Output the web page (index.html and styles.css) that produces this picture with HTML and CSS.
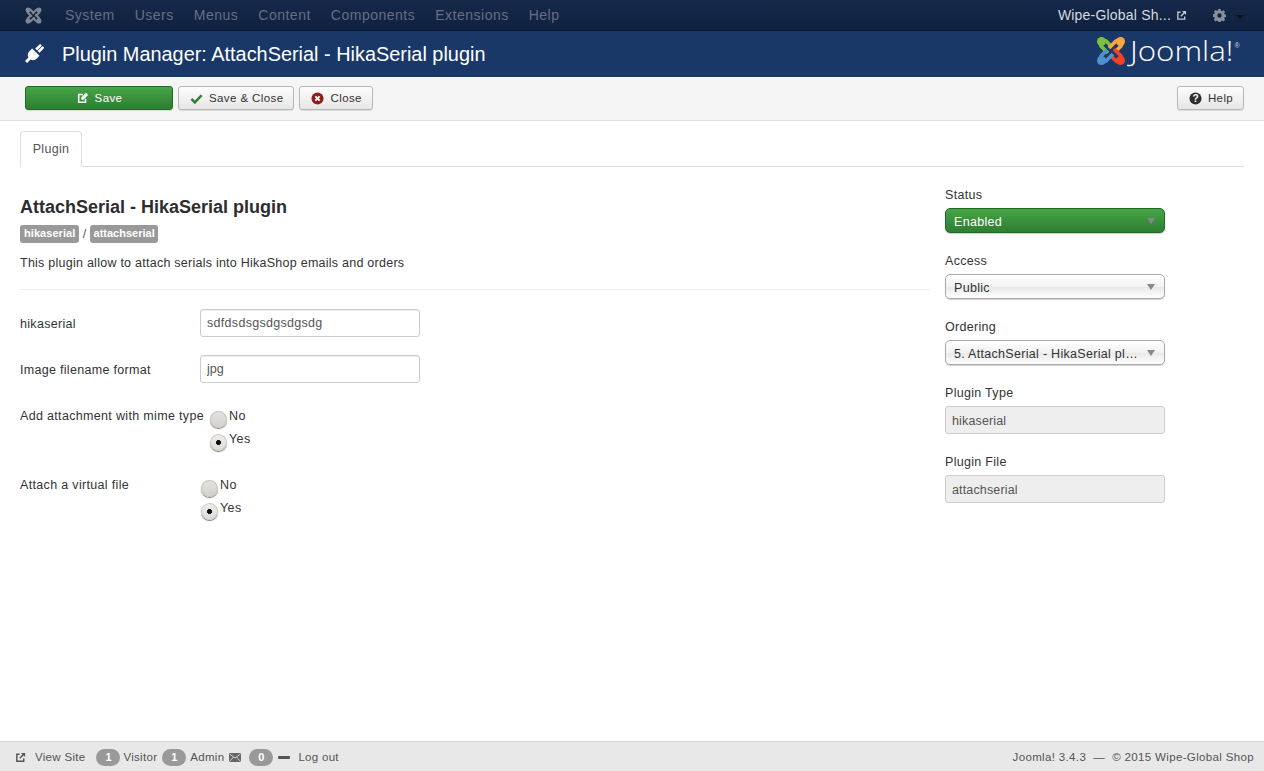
FILE: index.html
```html
<!DOCTYPE html>
<html lang="en">
<head>
<meta charset="utf-8">
<title>Plugin Manager</title>
<link rel="stylesheet" href="styles.css">
</head>
<body>
<nav class="topnav">
  <svg class="brand" viewBox="0 0 30 30" width="17" height="17"><defs><g id="arm"><path d="M16 11 L10 5 A3.800 3.800 0 0 0 5 10 L12 17" fill="none" stroke-width="3.800"/><circle cx="5.500" cy="5.500" r="4.500" stroke="none"/></g></defs><g fill="#7f8794" stroke="#7f8794"><use href="#arm"/><use href="#arm" transform="rotate(90 15 15)"/><use href="#arm" transform="rotate(180 15 15)"/><use href="#arm" transform="rotate(270 15 15)"/></g></svg>
  <ul class="menu">
    <li>System</li><li>Users</li><li>Menus</li><li>Content</li><li>Components</li><li>Extensions</li><li>Help</li>
  </ul>
  <div class="nav-right">
    <span class="site">Wipe-Global Sh...</span>
    <svg class="ext" viewBox="0 0 12 12" width="11" height="11"><path d="M9.500 7v3H2V2.500h3" fill="none" stroke="#c4c8cf" stroke-width="1.500"/><path d="M6.500 1h4.500v4.500L9.300 3.800 5.800 7.300 4.700 6.200 8.200 2.700z" fill="#c4c8cf"/></svg>
    <svg class="gear" viewBox="0 0 16 16" width="13" height="13"><path fill="#8a909b" fill-rule="evenodd" d="M6.600 0h2.800l.4 2.100 1.300.6 1.800-1.200 2 2-1.200 1.800.6 1.300 2.100.4v2.800l-2.100.4-.6 1.300 1.200 1.800-2 2-1.800-1.200-1.300.6-.4 2.100H6.600l-.4-2.100-1.300-.6-1.800 1.200-2-2 1.200-1.800-.6-1.300L-.4 9.400V6.600l2.100-.4.6-1.300L1.100 3.100l2-2 1.800 1.200 1.300-.6zM8 5.300a2.700 2.700 0 1 0 0 5.400 2.700 2.700 0 0 0 0-5.400z"/></svg>
    <span class="caret"></span>
  </div>
</nav>
<header class="titlebar">
  <svg class="plug" viewBox="0 0 20 20" width="21" height="21"><path fill="#fff" d="M0 18l3.300-3.300C2.200 12.500 2.700 10.300 4 9L6.800 6.200 13.800 13.200 11 16c-1.400 1.400-3.500 1.800-5.700.7L2 20z"/><path fill="#fff" d="M9.700 6.300l3.800-3.800c.6-.6 1.400-.6 1.900-.1s.5 1.300-.1 1.900L11.500 8.100zM12 8.500l3.800-3.800c.6-.6 1.400-.6 1.900-.1s.5 1.300-.1 1.900l-3.800 3.800z"/></svg>
  <h1>Plugin Manager: AttachSerial - HikaSerial plugin</h1>
  <div class="logo">
    <svg viewBox="0 0 30 30" width="30" height="30"><g fill="#7ac143" stroke="#7ac143"><use href="#arm"/></g><g fill="#f9a541" stroke="#f9a541"><use href="#arm" transform="rotate(90 15 15)"/></g><g fill="#f44321" stroke="#f44321"><use href="#arm" transform="rotate(180 15 15)"/></g><g fill="#5091cd" stroke="#5091cd"><use href="#arm" transform="rotate(270 15 15)"/></g></svg>
    <span class="logotext">Joomla!</span><sup class="reg">®</sup>
  </div>
</header>
<div class="toolbar">
  <button class="btn btn-success btn-save"><svg class="ic" viewBox="0 0 14 14" width="12" height="12"><path d="M10 8v4H2V3h5" fill="none" stroke="#fff" stroke-width="1.800"/><path d="M5 6.500L10.500 1 13 3.500 7.500 9H5z" fill="#fff"/></svg>Save</button>
  <button class="btn"><svg class="ic" viewBox="0 0 14 14" width="13" height="13"><path d="M1.500 7.500l3.700 3.700 7.300-7.700" fill="none" stroke="#2f7d32" stroke-width="2.600"/></svg>Save &amp; Close</button>
  <button class="btn"><svg class="ic" viewBox="0 0 14 14" width="13" height="13"><circle cx="7" cy="7" r="6.500" fill="#8f1f1b"/><path d="M4.700 4.700l4.600 4.600M9.300 4.700L4.700 9.300" stroke="#fff" stroke-width="2"/></svg>Close</button>
  <button class="btn btn-help"><svg class="ic" viewBox="0 0 14 14" width="13" height="13"><circle cx="7" cy="7" r="6.500" fill="#2d2d2d"/><text x="7" y="10.500" text-anchor="middle" class="qm">?</text></svg>Help</button>
</div>
<main class="content">
  <div class="tabs"><div class="tab">Plugin</div></div>
  <div class="columns">
    <section class="form">
      <h2>AttachSerial - HikaSerial plugin</h2>
      <div class="tags"><span class="tag">hikaserial</span><span class="slash">/</span><span class="tag tag-end">attachserial</span></div>
      <p class="desc">This plugin allow to attach serials into HikaShop emails and orders</p>
      <hr>
      <div class="row"><label>hikaserial</label><input class="text text-long" type="text" value="sdfdsdsgsdgsdgsdg"></div>
      <div class="row"><label>Image filename format</label><input class="text" type="text" value="jpg"></div>
      <div class="row radios">
        <label>Add attachment with mime type</label>
        <div class="options">
          <div class="opt"><input class="radio" type="radio" name="a"><span>No</span></div>
          <div class="opt"><input class="radio" type="radio" name="a" checked><span>Yes</span></div>
        </div>
      </div>
      <div class="row radios">
        <label>Attach a virtual file</label>
        <div class="options">
          <div class="opt"><input class="radio" type="radio" name="b"><span>No</span></div>
          <div class="opt"><input class="radio" type="radio" name="b" checked><span>Yes</span></div>
        </div>
      </div>
    </section>
    <aside class="side">
      <div class="field"><div class="flabel">Status</div><div class="select select-green"><span>Enabled</span><i></i></div></div>
      <div class="field"><div class="flabel">Access</div><div class="select"><span>Public</span><i></i></div></div>
      <div class="field"><div class="flabel">Ordering</div><div class="select"><span>5. AttachSerial - HikaSerial pl…</span><i></i></div></div>
      <div class="field"><div class="flabel">Plugin Type</div><input class="ro" readonly value="hikaserial"></div>
      <div class="field"><div class="flabel">Plugin File</div><input class="ro" readonly value="attachserial"></div>
    </aside>
  </div>
</main>
<footer class="status">
  <div class="st-left">
    <svg class="st-ic" viewBox="0 0 12 12" width="11" height="11"><path d="M9.500 7v3H2V2.500h3" fill="none" stroke="#555" stroke-width="1.600"/><path d="M6.500 1h4.500v4.500L9.300 3.800 5.800 7.300 4.700 6.200 8.200 2.700z" fill="#555"/></svg>
    <span class="vs">View Site</span>
    <b class="badge b1">1</b><span>Visitor</span>
    <b class="badge b2">1</b><span>Admin</span>
    <svg class="mail" viewBox="0 0 12 9" width="12" height="9"><rect width="12" height="9" rx="1" fill="#666"/><path d="M0.500 1l5.500 4 5.500-4M0.500 8.500L4.500 4M11.500 8.500L7.500 4" fill="none" stroke="#e8e8e8" stroke-width=".8"/></svg>
    <b class="badge b3">0</b>
    <i class="dash"></i>
    <span class="logout">Log out</span>
  </div>
  <div class="st-right">Joomla! 3.4.3 &nbsp;— &nbsp;© 2015 Wipe-Global Shop</div>
</footer>
</body>
</html>
```
FILE: styles.css
```css
* { box-sizing: border-box; }
html, body { height: 100%; }
body {
  margin: 0;
  display: flex;
  flex-direction: column;
  height: 771px;
  overflow: hidden;
  font-family: "Liberation Sans", Arial, sans-serif;
  font-size: 12.5px;
  letter-spacing: 0.3px;
  color: #333;
  background: #fff;
}
.topnav {
  height: 31px;
  flex: none;
  display: flex;
  align-items: center;
  padding-left: 25px;
  background: linear-gradient(#17294a, #0f2140);
  border-bottom: 1px solid #0b1a33;
  font-size: 14px;
  letter-spacing: 0.5px;
  color: #666f7f;
}
.brand { flex: none; }
.menu { display: flex; gap: 20px; list-style: none; margin: 0 0 0 23px; padding: 0; }
.nav-right { margin-left: auto; display: flex; align-items: center; padding-right: 20px; }
.site { color: #d6d9de; letter-spacing: 0.2px; }
.ext { margin-left: 5px; }
.gear { margin-left: 26px; }
.caret { margin-left: 10px; margin-top: 3px; border: 4px solid transparent; border-top-color: #05101f; border-bottom: 0; border-left-width: 4.500px; border-right-width: 4.500px; }
.titlebar {
  height: 46px;
  flex: none;
  display: flex;
  align-items: center;
  padding: 0 24px 0 25px;
  background: #1a3867;
  color: #fff;
}
.plug { flex: none; margin-top: -4px; }
.titlebar h1 { margin: 0 0 0 16px; font-size: 19.900px; font-weight: 400; letter-spacing: 0; }
.logo { margin-left: auto; display: flex; align-items: center; margin-top: -6px; }
.logotext {
  display: block;
  font-family: "Open Sans", sans-serif;
  font-weight: 300;
  font-size: 27px;
  letter-spacing: 0;
  margin-left: 4px;
  width: 105px;
  white-space: nowrap;
  color: #fff;
  line-height: 30px;
  transform: scaleX(1.160);
  transform-origin: left center;
}
.reg { font-size: 7px; align-self: flex-start; margin: 6px 0 0 0; color: #cfd6e2; line-height: 8px; }
.toolbar {
  height: 44px;
  flex: none;
  display: flex;
  align-items: center;
  gap: 5px;
  padding: 0 20px 1px 25px;
  background: #f5f5f5;
  border-bottom: 1px solid #e0e0e0;
}
.btn {
  height: 24px;
  display: flex;
  align-items: center;
  justify-content: center;
  padding: 0 10px 0 11px;
  font: inherit;
  font-size: 11.500px;
  letter-spacing: 0.4px;
  color: #333;
  background: linear-gradient(#fdfdfd, #e6e6e6);
  border: 1px solid #b8b8b8;
  border-radius: 3px;
  box-shadow: 0 1px 1px rgba(0,0,0,.1);
}
.btn .ic { margin-right: 6px; flex: none; }
.btn-success { color: #fff; border-color: #1e6b22; background: linear-gradient(#46a546, #2f7d32); }
.btn-save { width: 148px; }
.btn-help { margin-left: auto; width: 67px; }
.qm { font-size: 11px; font-weight: 700; fill: #fff; letter-spacing: 0; }
.content { flex: 1; padding: 10px 20px 0; min-height: 0; }
.tabs { height: 36px; border-bottom: 1px solid #ddd; }
.tab {
  width: 62px;
  height: 36px;
  display: flex;
  align-items: center;
  justify-content: center;
  background: #fff;
  border: 1px solid #ddd;
  border-bottom-color: #fff;
  border-radius: 4px 4px 0 0;
  color: #555;
}
.columns { display: flex; gap: 15px; padding-top: 20px; }
.form { width: 910px; flex: none; padding-top: 9px; }
.form h2 { margin: 0; font-size: 18px; line-height: 22px; font-weight: 700; letter-spacing: 0; color: #2d2d2d; }
.tags { display: flex; align-items: center; margin-top: 7px; height: 18px; }
.tag {
  height: 18px;
  line-height: 17px;
  padding: 0 4px;
  background: #999;
  color: #fff;
  font-size: 11px;
  font-weight: 700;
  letter-spacing: 0.05px;
  border-radius: 3px;
}
.tag-end { padding: 0 3.500px; letter-spacing: 0; }
.slash { margin: 0 3.500px; color: #555; }
.desc { margin: 11px 0 0; line-height: 18px; letter-spacing: 0.25px; }
hr { border: 0; border-top: 1px solid #eee; margin: 17px 0 19px; }
.row { display: flex; margin-bottom: 18px; align-items: flex-start; }
.row label { width: 180px; height: 28px; flex: none; line-height: 30px; white-space: nowrap; }
.text {
  width: 220px;
  height: 28px;
  padding: 4px 6px;
  font: inherit;
  color: #555;
  background: #fff;
  border: 1px solid #ccc;
  border-radius: 3px;
  box-shadow: inset 0 1px 1px rgba(0,0,0,.075);
}
.text-long { letter-spacing: 0.3px; }
.row.radios { padding-top: 6px; margin-bottom: 22px; }
.row.radios label { height: auto; line-height: 18px; width: auto; min-width: 180px; padding-right: 5px; letter-spacing: 0.33px; }
.options { display: flex; flex-direction: column; gap: 5px; }
.opt { display: flex; align-items: flex-start; height: 18px; line-height: 18px; letter-spacing: 0.4px; }
.radio {
  appearance: none;
  -webkit-appearance: none;
  width: 17px;
  height: 17px;
  margin: 4px 2px 0 1px;
  flex: none;
  border-radius: 50%;
  background: linear-gradient(#e4e3e0, #d2d0cc);
  box-shadow: 0 1px 1px 0 #77756f, inset 0 0 0 1px #c9c7c2;
}
.radio:checked {
  background: radial-gradient(circle at 50% 50%, #111 0 2.200px, transparent 2.800px), linear-gradient(#efeeec, #dcdad6);
}
.side { width: 220px; flex: none; }
.field { margin-bottom: 20px; }
.flabel { line-height: 18px; margin-top: -1px; margin-bottom: 4px; }
.select {
  height: 25px;
  display: flex;
  align-items: center;
  justify-content: space-between;
  padding: 3px 9px 0 8px;
  background: linear-gradient(#fff 0, #f2f2f2 50%, #e8e8e8 52%, #fff 100%);
  border: 1px solid #aaa;
  border-radius: 5px;
  box-shadow: 0 1px 1px rgba(0,0,0,.2);
}
.select span { white-space: nowrap; letter-spacing: 0.3px; }
.select i { flex: none; border: 4px solid transparent; border-top: 6px solid #888; border-bottom: 0; margin-top: -3px; }
.select-green { color: #fff; border-color: #1e6b22; background: linear-gradient(#46a546, #2f7d32); }
.ro {
  display: block;
  width: 220px;
  height: 28px;
  padding: 5px 6px 3px;
  font: inherit;
  letter-spacing: 0.15px;
  color: #555;
  background: #eee;
  border: 1px solid #ccc;
  border-radius: 3px;
}
.status {
  height: 30px;
  flex: none;
  display: flex;
  align-items: center;
  justify-content: space-between;
  padding: 1px 10px 0 15px;
  background: #e8e8e8;
  border-top: 1px solid #d4d4d4;
  font-size: 11.500px;
  color: #555;
}
.st-right { letter-spacing: 0.35px; }
.st-left { display: flex; align-items: center; }
.vs { margin-left: 9px; margin-right: 10px; }
.badge { display: block; height: 17px; min-width: 24px; line-height: 17px; text-align: center; border-radius: 9px; background: #999; color: #fff; font-size: 11px; font-weight: 700; letter-spacing: 0; margin-right: 4px; }
.b1 { margin-left: 1px; margin-right: 3px; }
.b2 { margin-left: 5px; }
.mail { margin: 0 8px 0 5px; }
.b3 { margin-right: 5px; }
.dash { width: 12px; height: 3px; background: #555; border-radius: 1px; margin-right: 8px; }
```
